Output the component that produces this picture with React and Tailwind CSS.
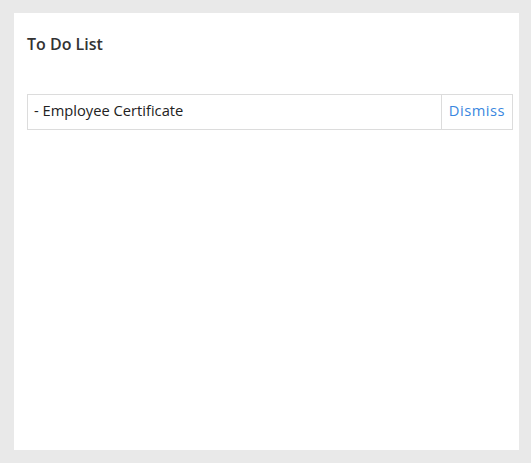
import React from 'react';

const items = ['Employee Certificate'];

export default function App() {
  return (
    <div className="min-h-[463px] w-full bg-[#e9e9e9] pl-[14px] pr-[12px] pt-[13px] pb-[13px]" style={{ fontFamily: '"Open Sans", "Liberation Sans", sans-serif' }}>
      <div className="h-[437px] w-[505px] bg-white pl-[13px] pr-[6px] pt-[20px]">
        <h3 className="text-[16px] font-semibold leading-[22px] text-[#333]">To Do List</h3>
        <table className="mt-[39px] w-full border-collapse text-[14.7px] text-[#222]">
          <tbody>
            {items.map((item) => (
              <tr key={item} className="h-[35px]">
                <td className="border border-[#dcdcdc] px-[6px] pb-[3px]">- {item}</td>
                <td className="w-[71px] border border-[#dcdcdc] px-[7px] pb-[3px] tracking-[0.5px] text-[#3a87e0]">Dismiss</td>
              </tr>
            ))}
          </tbody>
        </table>
      </div>
    </div>
  );
}
